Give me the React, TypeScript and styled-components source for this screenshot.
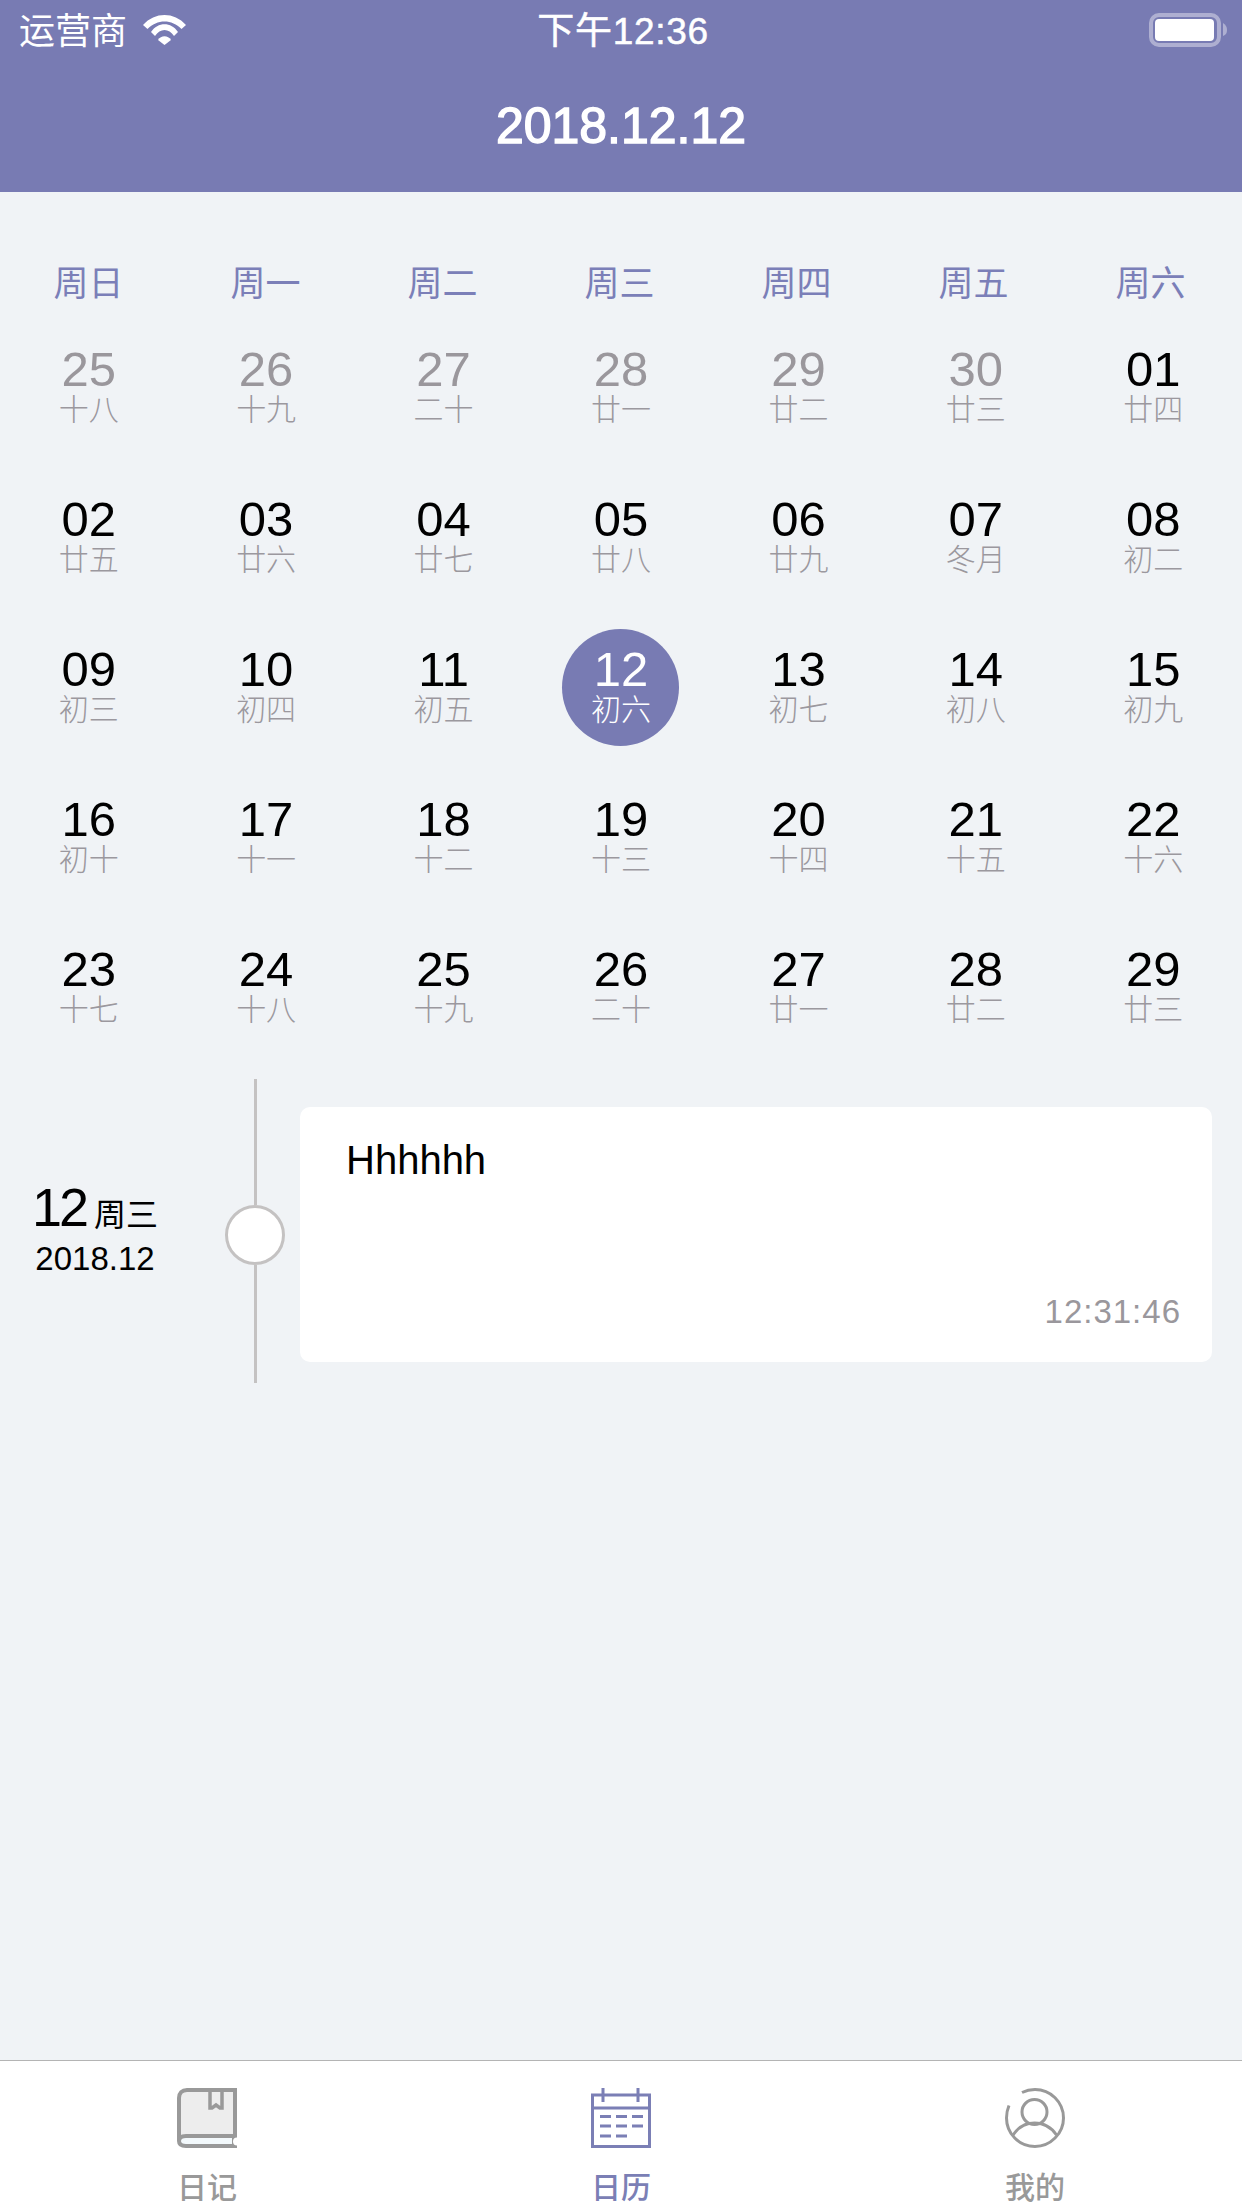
import React from 'react';
import styled, { createGlobalStyle } from 'styled-components';

const PURPLE = '#787bb3';
const FONT = `"Liberation Sans", "Noto Sans CJK SC", sans-serif`;

const GlobalStyle = createGlobalStyle`
  html, body {
    margin: 0;
    padding: 0;
    background: #f0f3f6;
  }
  * {
    box-sizing: border-box;
  }
`;

const Page = styled.div`
  width: 1242px;
  height: 2208px;
  display: flex;
  flex-direction: column;
  overflow: hidden;
  background: #f0f3f6;
  font-family: ${FONT};
`;

const Header = styled.header`
  height: 192px;
  flex: none;
  background: ${PURPLE};
  color: #fff;
`;

const StatusBar = styled.div`
  height: 60px;
  display: grid;
  grid-template-columns: 1fr auto 1fr;
  align-items: center;
  padding: 0 15px 0 19px;
`;

const Carrier = styled.div`
  display: flex;
  align-items: center;
  gap: 16px;
`;

const CarrierName = styled.span`
  padding-bottom: 4px;
  font-size: 36px;
`;

const Clock = styled.div`
  padding-bottom: 4px;
  font-size: 37px;
  letter-spacing: 0.7px;
  -webkit-text-stroke: 0.5px #fff;
`;

const BatteryWrap = styled.div`
  display: flex;
  justify-content: flex-end;
`;

const Title = styled.h1`
  margin: 0;
  height: 132px;
  display: flex;
  align-items: center;
  justify-content: center;
  font-size: 50px;
  font-weight: 400;
  -webkit-text-stroke: 1.4px #fff;
`;

const Calendar = styled.section`
  flex: none;
  padding-top: 63px;
`;

const WeekRow = styled.div`
  height: 50px;
  margin-bottom: 7px;
  padding-right: 3px;
  display: grid;
  grid-template-columns: repeat(7, 1fr);
  align-items: center;
  text-align: center;
  font-size: 35px;
  color: #7b7fb8;
`;

const DayGrid = styled.div`
  display: grid;
  grid-template-columns: repeat(7, 1fr);
  grid-auto-rows: 150px;
  justify-items: center;
  align-items: center;
`;

const Day = styled.div<{ $selected?: boolean }>`
  width: 117px;
  height: 117px;
  display: flex;
  flex-direction: column;
  align-items: center;
  justify-content: center;
  padding-bottom: 4px;
  border-radius: 50%;
  background: ${(p) => (p.$selected ? PURPLE : 'transparent')};
`;

const DayNum = styled.div<{ $selected?: boolean; $muted?: boolean }>`
  font-size: 49px;
  line-height: 48px;
  color: ${(p) => (p.$selected ? '#fff' : p.$muted ? '#9a979c' : '#000')};
`;

const Lunar = styled.div<{ $selected?: boolean }>`
  margin-top: 2px;
  font-size: 30px;
  line-height: 30px;
  font-weight: 300;
  color: ${(p) => (p.$selected ? '#fff' : '#9b989e')};
`;

const Timeline = styled.section`
  flex: none;
  height: 304px;
  margin-top: 17px;
  display: flex;
  align-items: center;
`;

const DateBox = styled.div`
  width: 192px;
  flex: none;
  margin-bottom: 4px;
  padding-right: 2px;
  display: flex;
  flex-direction: column;
  align-items: center;
  color: #000;
`;

const DateTop = styled.div`
  display: flex;
  align-items: baseline;
  gap: 8px;
  font-size: 54px;
  line-height: 52px;
  letter-spacing: -3px;
`;

const DateWeek = styled.span`
  font-size: 32px;
  letter-spacing: 0;
`;

const DateMonth = styled.div`
  font-size: 33px;
  line-height: 36px;
`;

const Axis = styled.div`
  width: 60px;
  height: 100%;
  flex: none;
  margin-left: 33px;
  margin-right: 15px;
  display: flex;
  flex-direction: column;
  align-items: center;
`;

const AxisLine = styled.div<{ $top?: boolean }>`
  flex: ${(p) => (p.$top ? '0 0 126px' : '1')};
  width: 3px;
  background: #c4c2c2;
`;

const AxisDot = styled.div`
  width: 60px;
  height: 60px;
  flex: none;
  border-radius: 50%;
  border: 3px solid #c4c2c2;
  background: #fff;
`;

const Card = styled.article`
  width: 912px;
  height: 255px;
  flex: none;
  margin-top: 6px;
  display: flex;
  flex-direction: column;
  justify-content: space-between;
  padding: 30px 31px 30px 46px;
  border-radius: 10px;
  background: #fff;
`;

const CardText = styled.div`
  font-size: 40px;
  line-height: 46px;
  color: #000;
`;

const CardTime = styled.div`
  align-self: flex-end;
  font-size: 33px;
  line-height: 40px;
  letter-spacing: 1px;
  color: #9a979c;
`;

const Spacer = styled.div`
  flex: 1;
`;

const TabBar = styled.nav`
  height: 148px;
  flex: none;
  display: grid;
  grid-template-columns: repeat(3, 1fr);
  border-top: 1px solid #b4b4b4;
  background: #fff;
`;

const Tab = styled.div<{ $active?: boolean }>`
  display: flex;
  flex-direction: column;
  align-items: center;
  padding-top: 27px;
  color: ${(p) => (p.$active ? '#7b7fb5' : '#999')};
`;

const TabLabel = styled.div`
  margin-top: 22px;
  font-size: 30px;
  line-height: 36px;
  font-weight: 500;
`;

const WifiIcon = () => (
  <svg width="43" height="30" viewBox="0 0 43 30" fill="#fff">
    <path d="M0 10C12 -3.300 31 -3.300 43 10L38.500 14C29 4 14 4 4.500 14Z" />
    <path d="M8 17C15 6.700 28 6.700 35 17L31 21C26 13 17 13 12 21Z" />
    <path d="M15 25C18 20 25 20 28 25L21.500 30Z" />
  </svg>
);

const BatteryIcon = () => (
  <svg width="78" height="34" viewBox="0 0 78 34">
    <rect x="2" y="2" width="68" height="30" rx="8" fill="none" stroke="#fff" strokeOpacity="0.4" strokeWidth="4" />
    <rect x="6" y="6" width="59" height="22" rx="4" fill="#fff" />
    <path d="M74 10C77 12 78 14 78 17C78 20 77 22 74 23Z" fill="#fff" fillOpacity="0.4" />
  </svg>
);

const BookIcon = () => (
  <svg width="60" height="60" viewBox="0 0 60 60">
    <path d="M2 48V10C2 5 5 2 10 2H58V48Z" fill="#ededed" />
    <path d="M8 49H58V58H8C4.500 58 2 56 2 53.500C2 51 4.500 49 8 49Z" fill="#f3f9fc" />
    <path
      d="M60 58H9C4.500 58 2 56 2 53C2 50 4.500 48 9 48H58V2H10C5 2 2 5 2 10V53"
      fill="none"
      stroke="#999"
      strokeWidth="4"
    />
    <path d="M33 2V20H35L39 17L43 20H45V2" fill="none" stroke="#999" strokeWidth="3.500" />
    <path d="M55 47H60V60H55Z" fill="#999" />
    <circle cx="60" cy="53.500" r="4" fill="#fff" />
  </svg>
);

const CalendarIcon = () => (
  <svg width="60" height="60" viewBox="0 0 60 60" fill="none" stroke="#7b7fb5" strokeWidth="3">
    <rect x="1.500" y="7" width="57" height="51.500" />
    <path d="M1.500 20H58.500M12 0V14M47 0V14" />
    <path d="M9 28.500H20M25 28.500H36M41 28.500H52M9 38H20M25 38H36M41 38H52M9 48H20M25 48H36" />
  </svg>
);

const PersonIcon = () => (
  <svg width="60" height="60" viewBox="0 0 60 60" fill="none" stroke="#999" strokeWidth="3">
    <path d="M17 4.500C21 2.500 25 1.500 30 1.500C45.500 1.500 58.500 14 58.500 30C58.500 45.500 45.500 58.500 30 58.500C14 58.500 1.500 45.500 1.500 30C1.500 25.500 2.500 21 4 17.500" />
    <circle cx="29.500" cy="24" r="12.500" />
    <path d="M8 47C13 39.500 20 35 29.500 35C39 35 46.500 39.500 51.500 47" />
  </svg>
);

const WEEK = ['周日', '周一', '周二', '周三', '周四', '周五', '周六'];

const DAYS: [string, string, boolean?][] = [
  ['25', '十八', true], ['26', '十九', true], ['27', '二十', true], ['28', '廿一', true], ['29', '廿二', true], ['30', '廿三', true], ['01', '廿四'],
  ['02', '廿五'], ['03', '廿六'], ['04', '廿七'], ['05', '廿八'], ['06', '廿九'], ['07', '冬月'], ['08', '初二'],
  ['09', '初三'], ['10', '初四'], ['11', '初五'], ['12', '初六'], ['13', '初七'], ['14', '初八'], ['15', '初九'],
  ['16', '初十'], ['17', '十一'], ['18', '十二'], ['19', '十三'], ['20', '十四'], ['21', '十五'], ['22', '十六'],
  ['23', '十七'], ['24', '十八'], ['25', '十九'], ['26', '二十'], ['27', '廿一'], ['28', '廿二'], ['29', '廿三'],
];

const SELECTED_INDEX = 17;

const App = () => {
  return (
    <Page>
      <GlobalStyle />
      <Header>
        <StatusBar>
          <Carrier>
            <CarrierName>运营商</CarrierName>
            <WifiIcon />
          </Carrier>
          <Clock>下午12:36</Clock>
          <BatteryWrap>
            <BatteryIcon />
          </BatteryWrap>
        </StatusBar>
        <Title>2018.12.12</Title>
      </Header>

      <Calendar>
        <WeekRow>
          {WEEK.map((w) => (
            <div key={w}>{w}</div>
          ))}
        </WeekRow>
        <DayGrid>
          {DAYS.map(([num, lunar, muted], index) => {
            const selected = index === SELECTED_INDEX;
            return (
              <Day key={index} $selected={selected}>
                <DayNum $selected={selected} $muted={muted}>{num}</DayNum>
                <Lunar $selected={selected}>{lunar}</Lunar>
              </Day>
            );
          })}
        </DayGrid>
      </Calendar>

      <Timeline>
        <DateBox>
          <DateTop>
            12
            <DateWeek>周三</DateWeek>
          </DateTop>
          <DateMonth>2018.12</DateMonth>
        </DateBox>
        <Axis>
          <AxisLine $top />
          <AxisDot />
          <AxisLine />
        </Axis>
        <Card>
          <CardText>Hhhhhh</CardText>
          <CardTime>12:31:46</CardTime>
        </Card>
      </Timeline>

      <Spacer />

      <TabBar>
        <Tab>
          <BookIcon />
          <TabLabel>日记</TabLabel>
        </Tab>
        <Tab $active>
          <CalendarIcon />
          <TabLabel>日历</TabLabel>
        </Tab>
        <Tab>
          <PersonIcon />
          <TabLabel>我的</TabLabel>
        </Tab>
      </TabBar>
    </Page>
  );
};

export default App;
